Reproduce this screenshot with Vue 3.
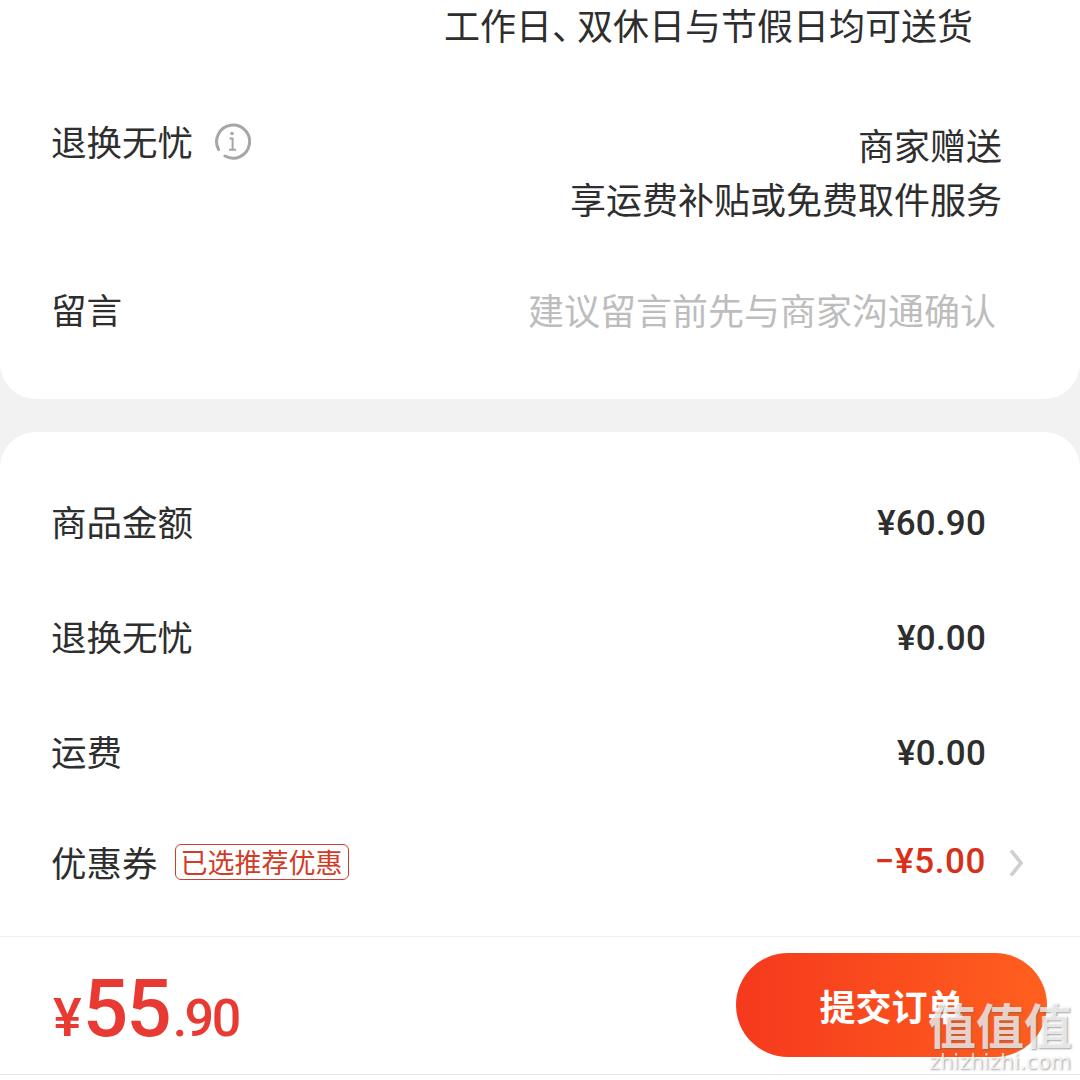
<template>
  <div class="page">
    <div class="cards">
      <section class="card card-top">
        <p class="delivery">工作日<span class="comma">、</span>双休日与节假日均可送货</p>
        <div class="row row-return">
          <div class="label">
            <span>退换无忧</span>
            <svg class="info" width="38" height="38" viewBox="0 0 38 38" fill="none">
              <path d="M5.6 27.5A16.5 16.5 0 1 1 12 34" stroke="#a6a6a6" stroke-width="3" stroke-linecap="round" />
              <circle cx="19" cy="11.5" r="1.8" fill="#a6a6a6" />
              <path d="M16.5 16.5H19.6V27.5M16 27.7H23" stroke="#a6a6a6" stroke-width="2" />
            </svg>
          </div>
          <div class="return-info">
            <p>商家赠送</p>
            <p>享运费补贴或免费取件服务</p>
          </div>
        </div>
        <div class="row row-note">
          <span class="label">留言</span>
          <span class="placeholder">建议留言前先与商家沟通确认</span>
        </div>
      </section>

      <section class="card card-sum">
        <div v-for="item in fees" :key="item.name" class="row row-fee">
          <span class="label">{{ item.name }}</span>
          <span class="money">{{ item.value }}</span>
        </div>
        <div class="row row-coupon">
          <div class="label">
            <span>优惠券</span>
            <span class="tag">已选推荐优惠</span>
          </div>
          <div class="discount">
            <span class="money red">−¥5.00</span>
            <svg class="chevron" width="16" height="30" viewBox="0 0 16 30" fill="none">
              <path d="M3 2.5L13 15L3 27.5" stroke="#cfcfcf" stroke-width="3.6" />
            </svg>
          </div>
        </div>
      </section>
    </div>

    <footer class="bar">
      <div class="total">
        <span class="yen">¥</span><span class="big">55</span><span class="cents">.90</span>
      </div>
      <button class="submit">提交订单</button>
      <div class="watermark">
        <span class="wm-mark">值值值</span>
        <span class="wm-site">zhizhizhi.com</span>
      </div>
    </footer>
  </div>
</template>

<script setup>
const fees = [
  { name: "商品金额", value: "¥60.90" },
  { name: "退换无忧", value: "¥0.00" },
  { name: "运费", value: "¥0.00" },
];
</script>

<style>
html,
body {
  margin: 0;
  background: #fff;
}
</style>

<style scoped>
.page {
  position: relative;
  width: 1080px;
  height: 1080px;
  overflow: hidden;
  background: #fff;
  color: #2e2e2e;
  font-family: "Noto Sans CJK SC", "Noto Sans", sans-serif;
  font-size: 36px;
  line-height: 54px;
}

p {
  margin: 0;
}

.cards {
  background: #f2f2f2;
}

.card {
  background: #fff;
}

.card-top {
  height: 399px;
  box-sizing: border-box;
  border-radius: 0 0 36px 36px;
}

.card-sum {
  height: 504px;
  box-sizing: border-box;
  margin-top: 33px;
  padding-top: 62px;
  border-radius: 36px 36px 0 0;
}

.delivery {
  height: 54px;
  margin-left: 444px;
  line-height: 48px;
}

.comma {
  display: inline-block;
  width: 25px;
  overflow: hidden;
  vertical-align: top;
}

.row {
  display: flex;
  justify-content: space-between;
  padding-left: 51px;
}

.label {
  display: flex;
  align-items: center;
  font-size: 35.5px;
}

.row-return {
  align-items: flex-start;
  margin-top: 60px;
  padding-right: 78px;
}

.info {
  margin-left: 20px;
}

.return-info {
  padding-top: 3px;
  text-align: right;
  white-space: nowrap;
}

.row-note {
  margin-top: 57px;
  padding-right: 84px;
}

.placeholder {
  color: #bdbdbd;
}

.row-fee {
  margin-bottom: 61px;
  padding-right: 94px;
}

.row-fee:nth-child(3) {
  margin-bottom: 57px;
}

.money {
  box-sizing: border-box;
  height: 54px;
  padding-top: 3px;
  font-family: Roboto, "Noto Sans", sans-serif;
  font-size: 35px;
  font-weight: 500;
  letter-spacing: 0.2px;
}

.red {
  padding-top: 0;
  color: #d9301a;
  letter-spacing: 0.6px;
}

.row-coupon {
  padding-right: 56px;
}

.tag {
  box-sizing: border-box;
  width: 174px;
  height: 36px;
  margin-left: 17px;
  border: 1px solid #c8402f;
  border-radius: 6px;
  color: #d23c26;
  font-size: 27px;
  line-height: 33px;
  text-align: center;
}

.discount {
  display: flex;
  align-items: center;
  gap: 22px;
}

.chevron {
  margin-top: 2px;
}

.bar {
  position: relative;
  display: flex;
  align-items: center;
  justify-content: space-between;
  box-sizing: border-box;
  height: 139px;
  padding: 0 33px 1px 53px;
  background: #fff;
  border-top: 1px solid #f0f0f0;
  border-bottom: 1px solid #e4e4e4;
}

.total {
  display: flex;
  align-items: baseline;
  padding-top: 18px;
  color: #e83a32;
  font-family: Roboto, "Noto Sans", sans-serif;
  font-weight: 500;
  line-height: 80px;
}

.yen {
  margin-right: 1px;
  font-size: 54px;
}

.big {
  font-size: 80px;
  letter-spacing: -2px;
}

.cents {
  margin-left: 3px;
  font-size: 52px;
  letter-spacing: -2.5px;
}

.submit {
  width: 311px;
  height: 104px;
  border: 0;
  border-radius: 52px;
  background: linear-gradient(90deg, #f5391d, #ff601e);
  color: #fff;
  font-family: inherit;
  font-size: 36px;
  font-weight: 700;
}

.watermark {
  position: absolute;
  right: 8px;
  top: 58px;
  display: flex;
  flex-direction: column;
  align-items: center;
  color: rgba(255, 255, 255, 0.72);
  text-shadow: 1px 1px 2px rgba(100, 100, 100, 0.6);
}

.wm-mark {
  font-size: 48px;
  font-weight: 700;
  line-height: 56px;
}

.wm-site {
  font-family: "DejaVu Sans", sans-serif;
  font-size: 21px;
  line-height: 22px;
}
</style>
